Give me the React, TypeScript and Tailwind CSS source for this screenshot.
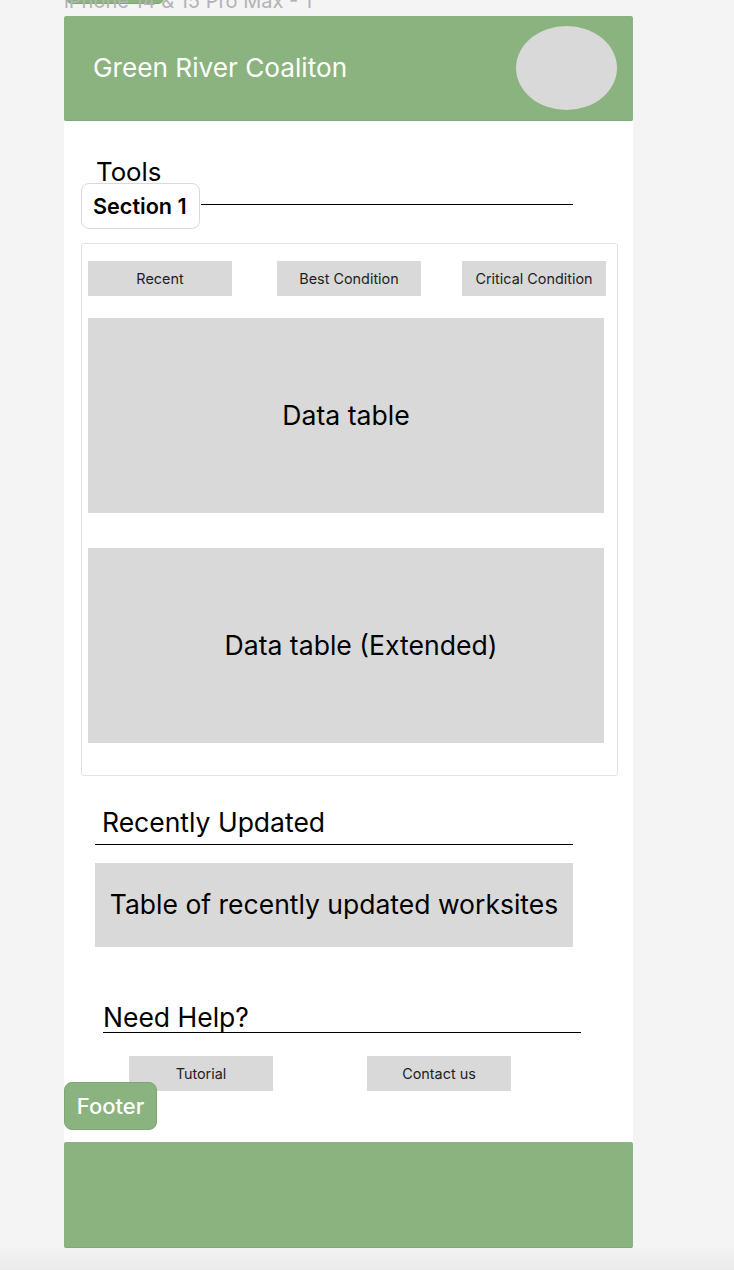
import React from "react";

const font = { fontFamily: "Inter, 'Noto Sans', sans-serif" };

function GrayBtn({ label, className = "" }: { label: string; className?: string }) {
  return (
    <div
      className={
        "w-[144px] h-[35px] bg-[#d9d9d9] flex items-center justify-center text-[14.4px] text-[#1e1e1e] " +
        className
      }
    >
      {label}
    </div>
  );
}

export default function App() {
  return (
    <div className="w-[734px] min-h-[1270px] bg-[#f4f4f4] text-black" style={font}>
      {/* canvas label */}
      <div className="relative h-4 overflow-hidden pl-16">
        <div className="absolute left-[66px] top-[-20px] w-[98px] h-[24px] rounded-md bg-[#8bb37f] border border-[#7fa673]" />
        <div className="relative -mt-[9px] text-[20px] leading-[20px] text-[#b3b3b3] whitespace-nowrap">
          iPhone 14 &amp; 15 Pro Max - 1
        </div>
      </div>

      {/* frame */}
      <div className="relative ml-16 w-[569px] bg-white flex flex-col">
        {/* header */}
        <div className="h-[105px] bg-[#8bb37f] rounded-[2px] border-b border-[#82aa76] flex items-center justify-between pl-[29px] pr-[16px]">
          <div className="text-[26.2px] text-white leading-none">Green River Coaliton</div>
          <div className="w-[101px] h-[84px] rounded-[50%] bg-[#d9d9d9]" />
        </div>

        {/* Tools */}
        <div className="mt-[39px] pl-8 h-[23px] text-[25.8px] leading-[23px]">Tools</div>
        <div className="flex ml-[17px]">
          <div className="w-[119px] h-[46px] bg-white border border-[#d9d9d9] rounded-lg flex items-center pl-[11px] text-[21.6px] font-semibold">
            Section 1
          </div>
          <div className="mt-[21px] ml-[1px] w-[372px] h-px bg-black" />
        </div>

        {/* card */}
        <div className="mt-[14px] ml-[17px] w-[537px] h-[533px] border border-[#e3e3e3] rounded-[3px] pt-[17px] pl-[6px]">
          <div className="flex">
            <GrayBtn label="Recent" />
            <GrayBtn label="Best Condition" className="ml-[45px]" />
            <GrayBtn label="Critical Condition" className="ml-[41px]" />
          </div>
          <div className="mt-[22px] w-[516px] h-[195px] bg-[#d9d9d9] flex items-center justify-center text-[26.6px]">
            Data table
          </div>
          <div className="mt-[35px] w-[516px] h-[195px] bg-[#d9d9d9] flex items-center justify-center pl-[30px] text-[26.6px]">
            Data table (Extended)
          </div>
        </div>

        {/* Recently Updated */}
        <div className="mt-[31px] ml-[31px] w-[478px]">
          <div className="pl-[7px] h-[30px] text-[26.5px] leading-[30px]">Recently Updated</div>
          <div className="mt-[7px] h-px bg-black" />
          <div className="mt-[18px] h-[84px] bg-[#d9d9d9] flex items-center justify-center text-[26.5px]">
            Table of recently updated worksites
          </div>
        </div>

        {/* Need Help */}
        <div className="mt-[55px] ml-[39px] w-[478px]">
          <div className="h-[30px] text-[26.5px] leading-[30px]">Need Help?</div>
          <div className="h-px bg-black" />
        </div>
        <div className="mt-[23px] ml-[65px] flex">
          <GrayBtn label="Tutorial" />
          <GrayBtn label="Contact us" className="ml-[94px]" />
        </div>

        {/* footer */}
        <div className="mt-[51px] h-[106px] bg-[#8bb37f] rounded-[2px] border-b border-[#82aa76]" />

        {/* Footer tag */}
        <div className="absolute left-0 top-[1066px] w-[93px] h-[48px] rounded-lg bg-[#8bb37f] border border-[#7fa673] flex items-center justify-center text-white text-[22px] font-medium">
          Footer
        </div>
      </div>
      <div className="h-[22px] bg-gradient-to-b from-[#f2f2f2] to-[#ebebeb]" />
    </div>
  );
}
